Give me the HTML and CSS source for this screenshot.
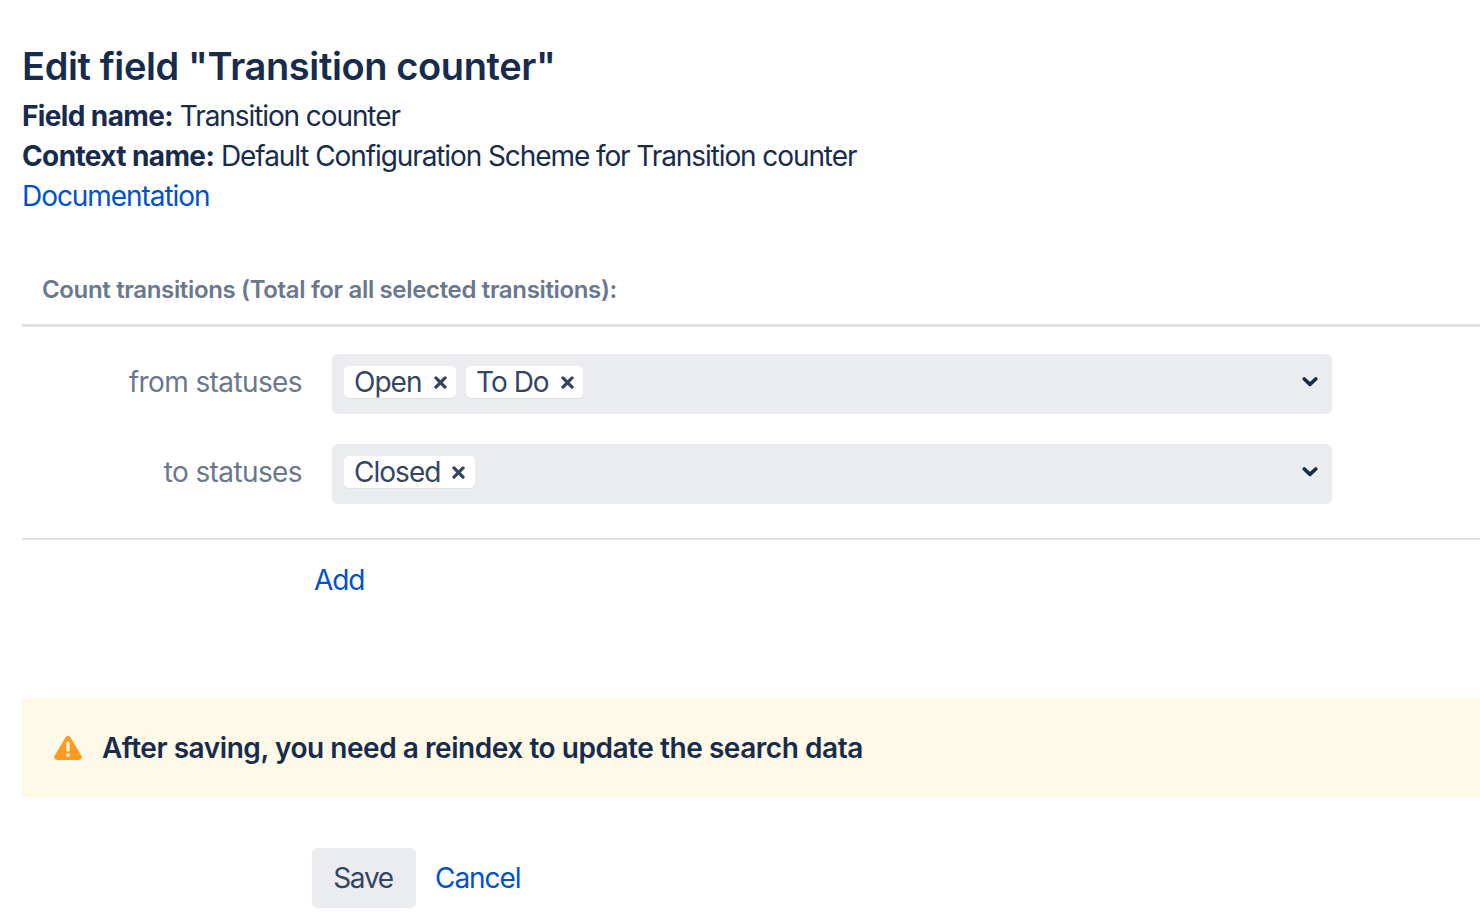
FILE: index.html
```html
<!DOCTYPE html>
<html lang="en">
<head>
<meta charset="utf-8">
<title>Edit field</title>
<link rel="stylesheet" href="styles.css">
</head>
<body>
<main class="page">
  <h1 class="title">Edit field "Transition counter"</h1>
  <p class="meta"><strong>Field name:</strong> Transition counter</p>
  <p class="meta"><strong>Context name:</strong> Default Configuration Scheme for Transition counter</p>
  <p class="meta"><a class="link" href="#">Documentation</a></p>

  <h2 class="section-head">Count transitions (Total for all selected transitions):</h2>
  <div class="rows">
    <div class="row">
      <span class="row-label">from statuses</span>
      <div class="select">
        <span class="tag">Open<svg class="tag-x" viewBox="0 0 12 12"><path d="M1.8 1.8l8.4 8.4M10.2 1.8l-8.4 8.4"/></svg></span>
        <span class="tag">To Do<svg class="tag-x" viewBox="0 0 12 12"><path d="M1.8 1.8l8.4 8.4M10.2 1.8l-8.4 8.4"/></svg></span>
        <svg class="chev" viewBox="0 0 14 10"><path d="M2 2.4L7 7l5-4.6"/></svg>
      </div>
    </div>
    <div class="row">
      <span class="row-label">to statuses</span>
      <div class="select">
        <span class="tag">Closed<svg class="tag-x" viewBox="0 0 12 12"><path d="M1.8 1.8l8.4 8.4M10.2 1.8l-8.4 8.4"/></svg></span>
        <svg class="chev" viewBox="0 0 14 10"><path d="M2 2.4L7 7l5-4.6"/></svg>
      </div>
    </div>
  </div>
  <div class="add-row"><a class="link" href="#">Add</a></div>

  <div class="alert">
    <svg class="alert-icon" viewBox="0 0 28 24">
      <path class="tri" d="M11.4 1.6c1.2-2.1 4-2.1 5.2 0l10.7 18.2c1.2 2-.2 4.2-2.6 4.2H3.3C.9 24-.5 21.8.7 19.8z"/>
      <rect class="mark" x="12.4" y="5.5" width="3.2" height="10" rx="1.6"/>
      <circle class="mark" cx="14" cy="19" r="1.9"/>
    </svg>
    <span class="alert-text">After saving, you need a reindex to update the search data</span>
  </div>

  <div class="actions">
    <button class="btn" type="button">Save</button>
    <a class="link" href="#">Cancel</a>
  </div>
</main>
</body>
</html>
```
FILE: styles.css
```css
* { box-sizing: border-box; }
html, body { margin: 0; padding: 0; background: #fff; }
body {
  font-family: Inter, "Liberation Sans", sans-serif;
  font-size: 28px;
  line-height: 40px;
  color: #172b4d;
  height: 924px;
  overflow: hidden;
}
.page { padding: 46px 0 0 22px; }
.title {
  margin: 0;
  font-size: 38px;
  line-height: 40px;
  font-weight: 600;
  letter-spacing: -0.38px;
  color: #172b4d;
}
.meta { margin: 0; font-size: 28px; line-height: 40px; letter-spacing: -1.09px; }
.meta strong { font-weight: 700; letter-spacing: -0.62px; }
.title + .meta { margin-top: 10px; }
.link { color: #0052cc; text-decoration: none; letter-spacing: -1.05px; }
.section-head {
  margin: 56px 0 0;
  padding: 0 0 16px 20px;
  font-size: 24px;
  line-height: 36px;
  font-weight: 600;
  letter-spacing: -0.34px;
  color: #6b778c;
  border-bottom: 3px solid #dfe1e6;
}
.rows {
  display: flex;
  flex-direction: column;
  gap: 30px;
  padding: 27px 0 34px;
  border-bottom: 2px solid #dfe1e6;
}
.row { display: flex; align-items: center; gap: 30px; }
.row-label {
  width: 280px;
  padding-bottom: 4px;
  text-align: right;
  color: #6b778c;
  letter-spacing: -0.6px;
}
.select {
  position: relative;
  width: 1000px;
  height: 60px;
  padding: 0 12px 4px;
  display: flex;
  align-items: center;
  gap: 10px;
  background: #ebecf0;
  border-radius: 6px;
}
.tag {
  display: inline-flex;
  align-items: center;
  height: 32px;
  padding: 0 9.5px 0 10px;
  gap: 12px;
  background: #fff;
  border-radius: 5px;
  color: #344563;
  letter-spacing: -0.98px;
  box-shadow: 0 1px 1px rgba(9, 30, 66, 0.06);
}
.tag-x {
  width: 13px;
  height: 13px;
  fill: none;
  stroke: #344563;
  stroke-width: 3;
  stroke-linecap: round;
}
.chev {
  position: absolute;
  right: 14px;
  top: 22px;
  width: 16px;
  height: 12px;
  fill: none;
  stroke: #172b4d;
  stroke-width: 3.2;
  stroke-linecap: round;
  stroke-linejoin: round;
}
.add-row { padding: 20px 0 0 292px; height: 158px; }
.alert {
  display: flex;
  align-items: center;
  gap: 20px;
  height: 100px;
  padding-left: 32px;
  background: #fff9e8;
  border-radius: 6px 0 0 6px;
}
.alert-icon { width: 28px; height: 24px; flex: none; }
.tri { fill: #ff991f; }
.mark { fill: #fffae6; }
.alert-text { font-weight: 600; letter-spacing: -0.45px; }
.actions { display: flex; align-items: center; gap: 19px; padding: 50px 0 0 290px; }
.btn {
  width: 104px;
  height: 60px;
  border: 0;
  border-radius: 6px;
  background: #ebecf0;
  color: #344563;
  font: inherit;
  letter-spacing: -1.3px;
  padding: 0 2px 0 0;
}
```
